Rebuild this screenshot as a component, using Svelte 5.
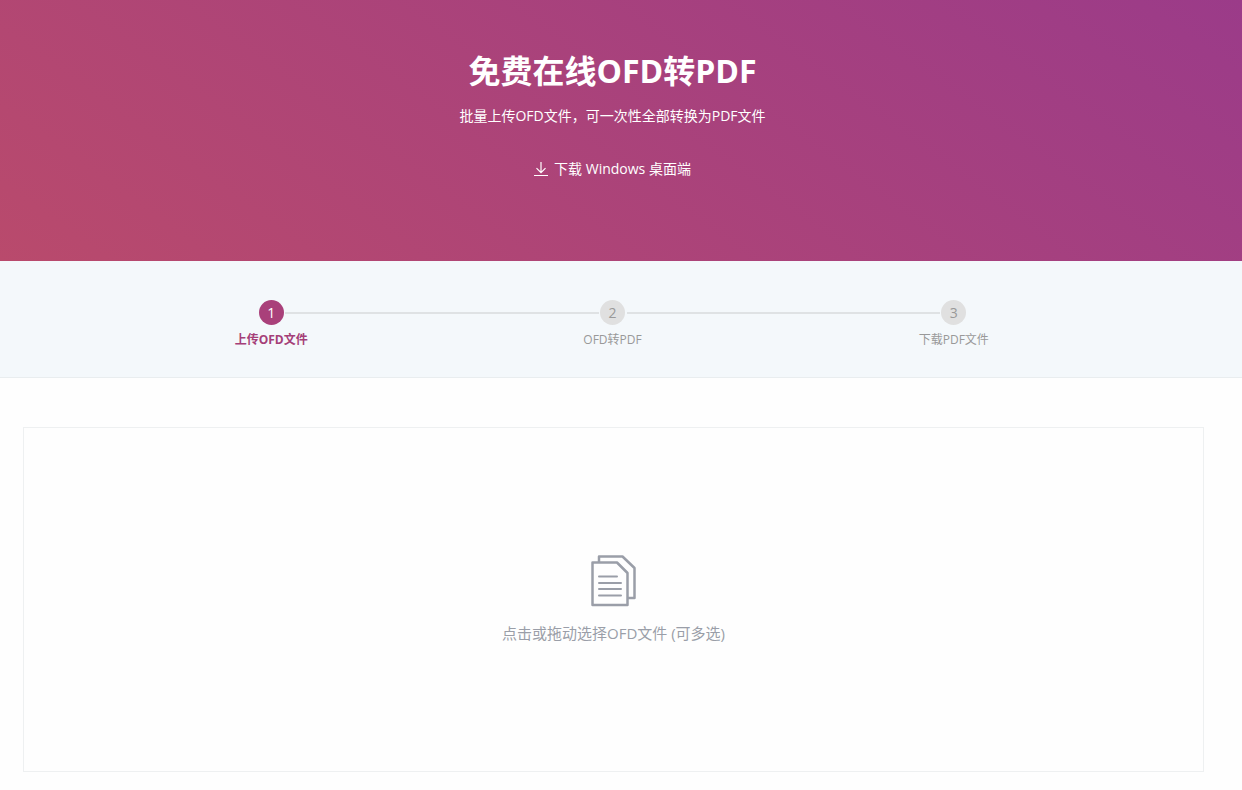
<script lang="ts">
	let current = $state(1);
	let files = $state<File[]>([]);
	const steps = ['上传OFD文件', 'OFD转PDF', '下载PDF文件'];

	function addFiles(list: FileList | null | undefined) {
		if (list) files = [...files, ...list];
	}

	function onDrop(e: DragEvent) {
		e.preventDefault();
		addFiles(e.dataTransfer?.files);
	}
</script>

<header class="banner">
	<h1>免费在线OFD转PDF</h1>
	<p>批量上传OFD文件，可一次性全部转换为PDF文件</p>
	<a class="download" href="#desktop">
		<svg width="14" height="14" viewBox="0 0 14 14" fill="none" stroke="currentColor">
			<path d="M7 0v10.5M2.5 6.2L7 10.7l4.5-4.5M0 13.5h14" stroke-width="1.2" />
		</svg>
		<span>下载 Windows 桌面端</span>
	</a>
</header>

<nav class="progress">
	<ol>
		{#each steps as step, i}
			<li class:active={i + 1 === current}>
				<span class="num">{i + 1}</span>
				<span class="label">{step}</span>
			</li>
		{/each}
	</ol>
</nav>

<main>
	<!-- svelte-ignore a11y_no_noninteractive_element_interactions -->
	<label class="dropzone" ondragover={(e) => e.preventDefault()} ondrop={onDrop}>
		<input type="file" accept=".ofd" multiple onchange={(e) => addFiles(e.currentTarget.files)} />
		<svg width="46" height="52" viewBox="0 0 46 52" fill="none" stroke="currentColor">
			<path d="M1.500 7.500H26l10.500 10.500v32h-35z" stroke-width="2.500" stroke-linejoin="round" />
			<path d="M8 7V1.500H31.500L43.500 13v30H37" stroke-width="2.500" stroke-linejoin="round" />
			<path d="M8 21.500h18M8 28h22M8 34h22M8 40.500h22" stroke-width="2" stroke-linecap="round" />
		</svg>
		<span>点击或拖动选择OFD文件 (可多选)</span>
	</label>
</main>

<style>
	:global(body) {
		background: #fefefe;
		font-family: 'Open Sans', 'Noto Sans CJK SC', sans-serif;
		font-size: 14px;
	}

	.banner {
		display: flex;
		flex-direction: column;
		align-items: center;
		padding: 47px 17px 81px 0;
		color: #fff;
		background: linear-gradient(36deg, #b94a6c, #9b3b89);
	}

	h1 {
		margin: 0;
		font-size: 32px;
		line-height: 48px;
	}

	p {
		margin: 9px 0 29px;
		line-height: 24px;
	}

	.download {
		display: flex;
		align-items: center;
		gap: 6px;
		line-height: 23px;
		color: inherit;
		text-decoration: none;
	}

	.progress {
		padding: 39px 17px 27px 0;
		border-bottom: 1px solid #e9edef;
		background: #f4f8fb;
	}

	ol {
		display: flex;
		max-width: 1024px;
		margin: 0 auto;
		padding: 0;
		list-style: none;
	}

	li {
		position: relative;
		flex: 1;
		display: flex;
		flex-direction: column;
		align-items: center;
		gap: 5px;
		font-size: 12px;
		color: #999;
	}

	/* line that joins a step to the one before it */
	li + li::before {
		content: '';
		position: absolute;
		top: 12px;
		right: calc(50% + 14px);
		left: calc(-50% + 14px);
		height: 2px;
		background: #dfe2e4;
	}

	.num {
		width: 25px;
		height: 25px;
		border-radius: 50%;
		font-size: 14px;
		line-height: 25px;
		text-align: center;
		background: #e0e0e0;
	}

	.label {
		line-height: 20px;
	}

	.active {
		color: #a53f78;
	}

	.active .num {
		color: #fff;
		background: #a9407a;
	}

	.active .label {
		font-weight: bold;
	}

	main {
		padding: 49px 38px 17px 23px;
	}

	.dropzone {
		display: flex;
		flex-direction: column;
		align-items: center;
		justify-content: center;
		gap: 15px;
		min-height: 343px;
		border: 1px solid #eef0f1;
		font-size: 15px;
		line-height: 22px;
		color: #9a9ea8;
		cursor: pointer;
	}

	.dropzone input {
		position: absolute;
		width: 1px;
		height: 1px;
		opacity: 0;
	}
</style>
